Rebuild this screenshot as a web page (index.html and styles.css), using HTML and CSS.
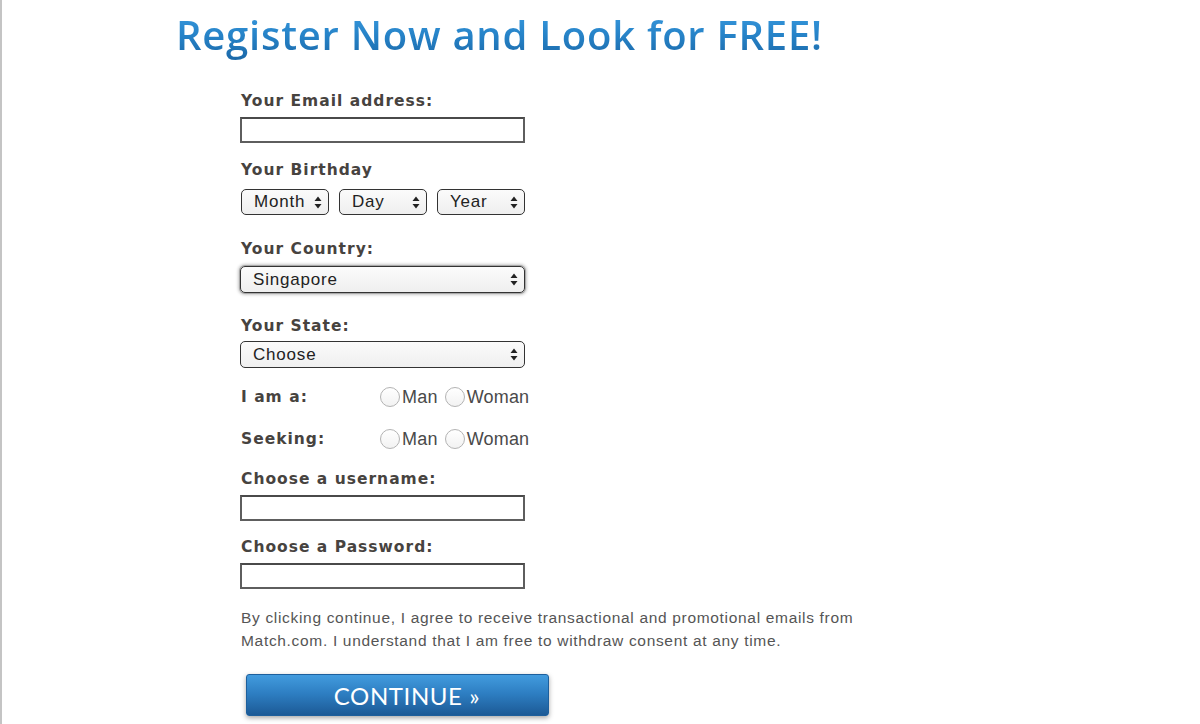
FILE: index.html
```html
<!DOCTYPE html>
<html lang="en">
<head>
<meta charset="utf-8">
<title>Register Now and Look for FREE!</title>
<link rel="stylesheet" href="styles.css">
</head>
<body>
<div class="page">
  <h1 class="title">Register Now and Look for FREE!</h1>
  <form class="form">
    <div class="field f-email">
      <label class="label">Your Email address:</label>
      <input class="text t-email" type="text">
    </div>
    <div class="field f-birthday">
      <label class="label">Your Birthday</label>
      <div class="row-selects">
        <div class="sel sel-small"><span class="sel-text">Month</span><svg class="arrows" viewBox="0 0 8 13"><path d="M4 0.5 L7.5 5 L0.5 5 Z M4 12.5 L7.5 8 L0.5 8 Z"/></svg></div>
        <div class="sel sel-small"><span class="sel-text">Day</span><svg class="arrows" viewBox="0 0 8 13"><path d="M4 0.5 L7.5 5 L0.5 5 Z M4 12.5 L7.5 8 L0.5 8 Z"/></svg></div>
        <div class="sel sel-small"><span class="sel-text">Year</span><svg class="arrows" viewBox="0 0 8 13"><path d="M4 0.5 L7.5 5 L0.5 5 Z M4 12.5 L7.5 8 L0.5 8 Z"/></svg></div>
      </div>
    </div>
    <div class="field f-country">
      <label class="label">Your Country:</label>
      <div class="sel sel-wide sel-focus"><span class="sel-text">Singapore</span><svg class="arrows" viewBox="0 0 8 13"><path d="M4 0.5 L7.5 5 L0.5 5 Z M4 12.5 L7.5 8 L0.5 8 Z"/></svg></div>
    </div>
    <div class="field f-state">
      <label class="label">Your State:</label>
      <div class="sel sel-wide sel-state"><span class="sel-text">Choose</span><svg class="arrows" viewBox="0 0 8 13"><path d="M4 0.5 L7.5 5 L0.5 5 Z M4 12.5 L7.5 8 L0.5 8 Z"/></svg></div>
    </div>
    <div class="radio-row r-first">
      <span class="label rlabel">I am a:</span>
      <span class="opt"><span class="radio"></span>Man</span>
      <span class="opt"><span class="radio"></span>Woman</span>
    </div>
    <div class="radio-row r-second">
      <span class="label rlabel">Seeking:</span>
      <span class="opt"><span class="radio"></span>Man</span>
      <span class="opt"><span class="radio"></span>Woman</span>
    </div>
    <div class="field f-user">
      <label class="label">Choose a username:</label>
      <input class="text" type="text">
    </div>
    <div class="field f-pass">
      <label class="label">Choose a Password:</label>
      <input class="text" type="password">
    </div>
    <p class="disclaimer">By clicking continue, I agree to receive transactional and promotional emails from<br>Match.com. I understand that I am free to withdraw consent at any time.</p>
    <button type="button" class="continue">CONTINUE »</button>
  </form>
</div>
</body>
</html>
```

FILE: styles.css
```css
html, body {
  margin: 0;
  padding: 0;
  background: #ffffff;
}
body {
  height: 724px;
  overflow: hidden;
  border-left: 2px solid #c4c4c4;
  box-sizing: border-box;
}
.page {
  padding-left: 174px;
}
.title {
  margin: 10px 0 0 0;
  font-family: "Open Sans", Lato, sans-serif;
  font-weight: 600;
  font-size: 40px;
  line-height: 50px;
  letter-spacing: 0.75px;
  color: #2480c4;
  background: linear-gradient(to bottom, #3a9be0 0%, #2683c8 50%, #1b68a8 100%);
  -webkit-background-clip: text;
  background-clip: text;
  -webkit-text-fill-color: transparent;
  display: inline-block;
}
.form {
  display: flex;
  flex-direction: column;
  align-items: flex-start;
  padding-left: 64px;
}
.field {
  display: flex;
  flex-direction: column;
  align-items: flex-start;
}
.label {
  font-family: "DejaVu Sans", Verdana, sans-serif;
  font-weight: bold;
  font-size: 15.5px;
  letter-spacing: 1px;
  line-height: 18px;
  color: #47433f;
  padding-left: 1px;
}
.f-email { margin-top: 32px; }
.f-birthday { margin-top: 18px; }
.f-country { margin-top: 25px; }
.f-state { margin-top: 24px; }
.f-user { margin-top: 20px; }
.f-pass { margin-top: 17px; }

.text {
  margin: 7px 0 0 0;
  width: 285px;
  height: 26px;
  box-sizing: border-box;
  border: 2px solid #5e5e5e;
  border-top-color: #4a4a4a;
  border-radius: 0;
  background: #fff;
  padding: 0 4px;
  outline: none;
}
.t-email { margin-top: 7px; }
.row-selects {
  display: flex;
  gap: 10px;
  margin-top: 10px;
  margin-left: 1px;
}
.sel {
  position: relative;
  height: 26px;
  box-sizing: border-box;
  border: 1.5px solid #333;
  border-radius: 5px;
  background: linear-gradient(to bottom, #fbfbfb, #efefef);
  display: flex;
  align-items: center;
  padding-left: 12px;
  font-family: "Liberation Sans", Arial, sans-serif;
  font-size: 17px;
  letter-spacing: 0.8px;
  color: #222;
}
.sel-small { width: 88px; }
.sel-wide {
  width: 285px;
  margin-top: 7px;
}
.sel-state {
  margin-top: 6px;
  height: 27px;
}
.sel-focus {
  height: 27px;
  margin-top: 8px;
  box-shadow: 0 0 0 1px #a9a9a9, 0 0 3px 2px #c8c8c8;
}
.arrows {
  position: absolute;
  right: 6px;
  top: 50%;
  width: 8px;
  height: 13px;
  margin-top: -6.5px;
  fill: #222;
}
.radio-row {
  display: flex;
  align-items: center;
  height: 22px;
}
.r-first { margin-top: 18px; }
.r-second { margin-top: 20px; }
.rlabel {
  width: 139px;
}
.opt {
  display: flex;
  align-items: center;
  font-family: "Liberation Sans", Arial, sans-serif;
  font-size: 18px;
  letter-spacing: 0.2px;
  color: #4a4a4a;
  margin-right: 7px;
}
.radio {
  width: 20px;
  height: 20px;
  box-sizing: border-box;
  border: 1px solid #b3b3b3;
  border-radius: 50%;
  background: linear-gradient(to bottom, #fff, #f2f2f2);
  margin-right: 2px;
}
.disclaimer {
  margin: 17px 0 0 0;
  padding-left: 1px;
  font-family: "Liberation Sans", Arial, sans-serif;
  font-size: 15.5px;
  letter-spacing: 0.68px;
  line-height: 23px;
  color: #555;
}
.continue {
  margin: 22px 0 0 6px;
  width: 303px;
  height: 42px;
  border: 1px solid #1d5f9c;
  border-radius: 3px;
  background: linear-gradient(to bottom, #429bde 0%, #2e7fc3 45%, #1c5a96 100%);
  box-shadow: 0 2px 5px rgba(0,0,0,0.35);
  color: #fff;
  font-family: Lato, "Open Sans", sans-serif;
  font-size: 24px;
  letter-spacing: 0.6px;
  padding: 0 0 0 19px;
  cursor: pointer;
}
```
